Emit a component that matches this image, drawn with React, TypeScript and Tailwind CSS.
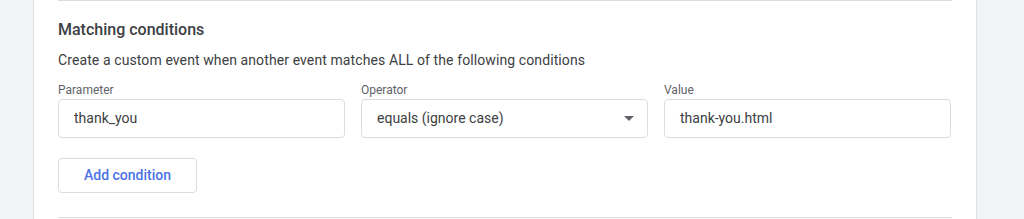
export default function App() {
  return (
    <div className="flex h-[219px] w-[1024px] overflow-hidden bg-[#f1f3f4] font-['Roboto',sans-serif]">
      <div className="ml-[33px] flex w-[944px] flex-col border-x border-[#e0e0e0] bg-white px-6">
        <div className="border-t border-[#dadce0]" />
        <h2 className="mt-[19px] text-[16px] leading-5 font-medium text-[#3c4043]">Matching conditions</h2>
        <p className="mt-[10px] text-[14px] leading-5 tracking-[0.1px] text-[#3c4043]">
          Create a custom event when another event matches ALL of the following conditions
        </p>
        <div className="mt-[12px] flex gap-4">
          <Field label="Parameter" value="thank_you" />
          <Field label="Operator" value="equals (ignore case)" select />
          <Field label="Value" value="thank-you.html" />
        </div>
        <div className="mt-5">
          <button className="h-[35px] w-[139px] rounded border border-[#dadce0] text-[14px] font-medium text-[#4d72e6]">
            Add condition
          </button>
        </div>
        <div className="mt-auto mb-[1px] border-t border-[#dadce0]" />
      </div>
    </div>
  );
}

function Field({ label, value, select }: { label: string; value: string; select?: boolean }) {
  return (
    <div className="flex w-[287px] flex-col">
      <span className="text-[12px] leading-[16px] text-[#5f6368]">{label}</span>
      <div className="mt-[1px] flex h-[39px] items-center justify-between rounded border border-[#dadce0] pl-[15px] pr-[13px] text-[14px] text-[#3c4043]">
        <span>{value}</span>
        {select && (
          <svg width="10" height="5" viewBox="0 0 10 5">
            <path d="M0 0 L10 0 L5 5 Z" fill="#5f6368" />
          </svg>
        )}
      </div>
    </div>
  );
}
